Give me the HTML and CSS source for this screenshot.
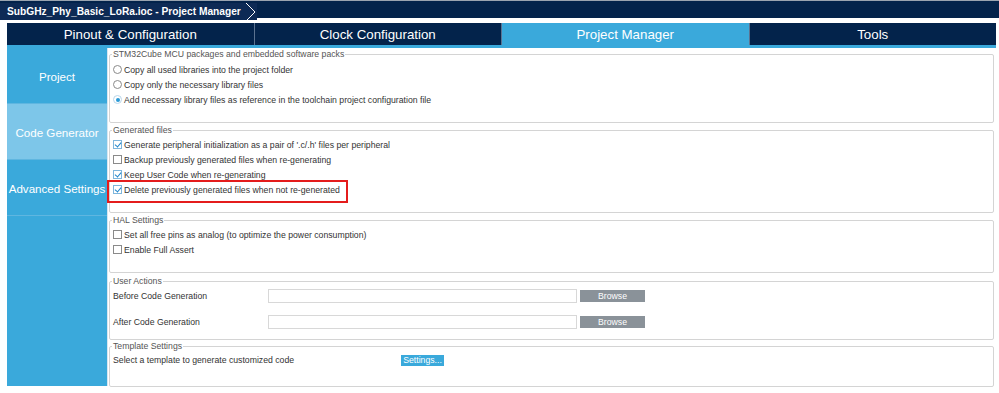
FILE: index.html
```html
<!DOCTYPE html>
<html>
<head>
<meta charset="utf-8">
<link rel="stylesheet" href="styles.css">
</head>
<body>
<div class="titlebar">
  <div class="crumb">SubGHz_Phy_Basic_LoRa.ioc - Project Manager
    <svg class="chev" width="12" height="18" viewBox="0 0 12 18"><polyline points="1,0 10,9 1,18" fill="#0d2a55" stroke="#ffffff" stroke-width="1"/></svg>
  </div>
</div>
<div class="tabs">
  <div class="tab">Pinout &amp; Configuration</div>
  <div class="tab">Clock Configuration</div>
  <div class="tab active">Project Manager</div>
  <div class="tab">Tools</div>
</div>
<div class="tabline"></div>
<div class="main">
  <div class="side">
    <div class="sitem">Project</div>
    <div class="sitem light">Code Generator</div>
    <div class="sitem">Advanced Settings</div>
    <div class="sfill"></div>
  </div>
  <div class="content">
    <fieldset class="fs fs1">
      <legend>STM32Cube MCU packages and embedded software packs</legend>
      <div class="row first"><span class="radio"></span>Copy all used libraries into the project folder</div>
      <div class="row"><span class="radio"></span>Copy only the necessary library files</div>
      <div class="row"><span class="radio on"></span>Add necessary library files as reference in the toolchain project configuration file</div>
    </fieldset>
    <fieldset class="fs fs2">
      <legend>Generated files</legend>
      <div class="row first"><span class="cb on"></span>Generate peripheral initialization as a pair of '.c/.h' files per peripheral</div>
      <div class="row"><span class="cb"></span>Backup previously generated files when re-generating</div>
      <div class="row"><span class="cb on"></span>Keep User Code when re-generating</div>
      <div class="row hl"><span class="cb on"></span>Delete previously generated files when not re-generated</div>
    </fieldset>
    <fieldset class="fs fs3">
      <legend>HAL Settings</legend>
      <div class="row first"><span class="cb"></span>Set all free pins as analog (to optimize the power consumption)</div>
      <div class="row"><span class="cb"></span>Enable Full Assert</div>
    </fieldset>
    <fieldset class="fs fs4">
      <legend>User Actions</legend>
      <div class="act"><span class="lbl">Before Code Generation</span><span class="inp"></span><span class="btn">Browse</span></div>
      <div class="act second"><span class="lbl">After Code Generation</span><span class="inp"></span><span class="btn">Browse</span></div>
    </fieldset>
    <fieldset class="fs fs5">
      <legend>Template Settings</legend>
      <div class="act tpl"><span class="lbl2">Select a template to generate customized code</span><span class="sbtn">Settings...</span></div>
    </fieldset>
  </div>
</div>
</body>
</html>
```
FILE: styles.css
```css
* { box-sizing: border-box; }
body { margin: 0; background: #fff; font-family: "Liberation Sans", Arial, sans-serif; width: 999px; height: 393px; overflow: hidden; }
.titlebar { height: 18px; background: #03234b; border-top: 1px solid #9aa4b0; }
.crumb { display: inline-flex; align-items: center; height: 17px; background: #0d2a55; color: #fff; font-weight: bold; font-size: 10.2px; padding-left: 7px; }
.chev { display: block; margin-left: 4px; }
.tabs { display: flex; margin: 5px 3px 0 7px; height: 22px; }
.tab { flex: 1; background: #03234b; color: #fff; font-size: 13.3px; display: flex; align-items: center; justify-content: center; border-right: 1px solid #5b7290; }
.tab:last-child { border-right: none; }
.tab.active { background: #3aa9db; }
.tabline { height: 3px; background: #3aa9db; margin: 0 3px 0 7px; }
.main { display: flex; margin: 0 3px 0 7px; height: 338px; }
.side { width: 100px; display: flex; flex-direction: column; background: #3aa9db; }
.sitem { height: 56px; color: #fff; font-size: 11.6px; white-space: nowrap; display: flex; align-items: center; justify-content: center; background: #3aa9db; border-bottom: 1px solid #5fb6e0; padding-top: 2px; }
.sitem.light { background: #7dc6e9; }
.sfill { flex: 1; }
.content { flex: 1; padding: 0 2px 0 1px; border-left: 1px solid #d6e6f0; }
.fs { border: 1px solid #d4d4d4; border-radius: 2px; margin: 0; padding: 0 0 0 3px; font-size: 8.7px; color: #333; }
.fs legend { color: #555; padding: 0 1px; margin-left: -1px; font-size: 8.7px; line-height: 10px; }
.fs1 { height: 74px; margin-top: 1px; }
.fs2 { height: 88px; margin-top: 2px; }
.fs3 { height: 58px; margin-top: 2px; }
.fs4 { height: 64px; margin-top: 3px; }
.fs5 { height: 46px; margin-top: 1px; }
.row { height: 15px; display: flex; align-items: center; }
.fs1 .row.first { margin-top: 3px; }
.fs2 .row.first, .fs3 .row.first { margin-top: 2px; }
.radio { width: 9px; height: 9px; border: 1px solid #8a8a8a; border-radius: 50%; margin-right: 2px; display: inline-block; position: relative; background: #fff; flex: none; }
.radio.on { border-color: #b9d6ea; }
.radio.on::after { content: ""; position: absolute; left: 1.5px; top: 1.5px; width: 4px; height: 4px; border-radius: 50%; background: #2a9ad6; }
.cb { width: 9px; height: 9px; border: 1px solid #8a8a8a; margin-right: 2px; display: inline-block; position: relative; background: #fff; flex: none; }
.cb.on { border-color: #7fb6dc; }
.cb.on::after { content: ""; position: absolute; left: 2px; top: 0px; width: 3px; height: 5px; border: solid #1f86cc; border-width: 0 1.7px 1.7px 0; transform: rotate(40deg); }
.hl { outline: 2px solid #e41c1c; margin-left: -4px; padding-left: 4px; width: 237px; height: 19px; padding-bottom: 4px; }
.act { display: flex; align-items: center; height: 20px; }
.act.second { margin-top: 6px; }
.act.tpl { height: 18px; }
.lbl { width: 155px; flex: none; }
.inp { width: 309px; height: 14px; border: 1px solid #d8d8d8; background: #fff; }
.btn { margin-left: 3px; width: 65px; height: 12px; background: #8a9299; color: #fff; display: flex; align-items: center; justify-content: center; }
.lbl2 { width: 288px; flex: none; }
.sbtn { width: 43px; height: 11px; background: #3aa9db; color: #fff; display: flex; align-items: center; justify-content: center; }
```
